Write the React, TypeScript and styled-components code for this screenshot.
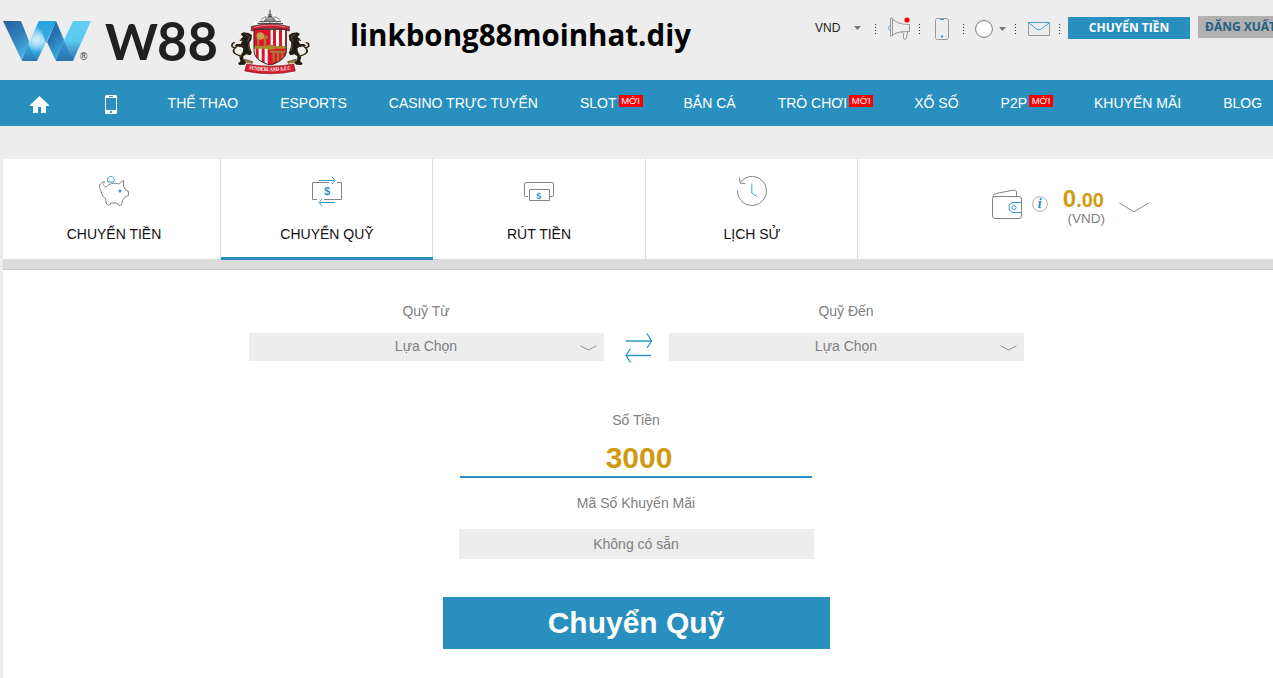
import React from "react";
import styled, { createGlobalStyle } from "styled-components";

const BLUE = "#298fbe";
const GREY = "#ededed";
const GOLD = "#d09a12";

const GlobalStyle = createGlobalStyle`
  * { box-sizing: border-box; }
  body {
    margin: 0;
    background: ${GREY};
    font-family: "Liberation Sans", Arial, sans-serif;
    font-size: 14px;
    overflow: hidden;
  }
  svg { display: block; flex: none; }
`;

const Page = styled.div`
  width: 1273px;
  height: 678px;
  overflow: hidden;
  display: flex;
  flex-direction: column;
`;

const Header = styled.header`
  display: flex;
  align-items: flex-start;
  height: 80px;
  flex: none;
  overflow: hidden;
`;

const Brand = styled.div`
  width: 350px;
  flex: none;
`;

const SiteTitle = styled.div`
  width: 465px;
  flex: none;
  padding-top: 13px;
  line-height: 44px;
`;

const Tools = styled.div`
  display: flex;
  align-items: center;
  width: 253px;
  height: 56px;
  flex: none;
  font-size: 12px;
  color: #222;
`;

const HeaderButton = styled.button<{ $muted?: boolean }>`
  flex: none;
  width: ${(p) => (p.$muted ? 90 : 122)}px;
  height: 22px;
  margin: ${(p) => (p.$muted ? "16px 0 0" : "17px 8px 0 0")};
  padding: 0 0 0 ${(p) => (p.$muted ? 7 : 0)}px;
  border: 0;
  background: ${(p) => (p.$muted ? "#b1b1b1" : BLUE)};
  color: ${(p) => (p.$muted ? "#235f80" : "#fff")};
  font: 700 12px/22px "Open Sans", "Noto Sans", sans-serif;
  text-align: ${(p) => (p.$muted ? "left" : "center")};
  white-space: nowrap;
`;

const Nav = styled.nav`
  display: flex;
  align-items: center;
  height: 46px;
  flex: none;
  padding-left: 30px;
  background: ${BLUE};
  color: #fff;
`;

const NavIcon = styled.a<{ $w: number; $gap: number }>`
  width: ${(p) => p.$w}px;
  margin-right: ${(p) => p.$gap}px;
  padding-top: 2px;
  flex: none;
`;

const NavItem = styled.a`
  display: flex;
  flex: none;
  margin-right: 42px;
  line-height: 46px;
  white-space: nowrap;
`;

const NewBadge = styled.span`
  width: 24px;
  height: 12px;
  margin: 15px -1px 0 2px;
  background: #f00;
  font: 400 9.5px/12px "Liberation Sans", Arial, sans-serif;
  text-align: center;
`;

const Panel = styled.main`
  flex: 1;
  margin: 33px 0 0 3px;
  background: #fff;
`;

const TabRow = styled.div`
  display: flex;
  height: 100px;
`;

const Tab = styled.div<{ $w: number; $active?: boolean; $inset?: number }>`
  display: flex;
  flex-direction: column;
  align-items: center;
  flex: none;
  width: ${(p) => p.$w}px;
  height: ${(p) => (p.$active ? 101 : 100)}px;
  padding-top: 16px;
  padding-left: ${(p) => p.$inset ?? 0}px;
  border-right: 1px solid #dcdcdc;
  border-bottom: ${(p) => (p.$active ? `3px solid ${BLUE}` : "0")};
  ${(p) => p.$active && "z-index: 1; border-right-width: 0; box-shadow: inset -1px 0 #dcdcdc;"}
  color: #111;
`;

const TabLabel = styled.span`
  margin-top: 19px;
  line-height: 16px;
`;

const Balance = styled.div`
  display: flex;
  align-items: flex-start;
  padding: 29px 0 0 133px;
`;

const Amount = styled.div`
  width: 42px;
  margin: -1px 15px 0 14px;
  text-align: right;
  color: ${GOLD};
  font-weight: 700;
  font-size: 20px;
  line-height: 24px;
  white-space: nowrap;
`;

const BigDigit = styled.span`
  font-size: 24px;
`;

const Currency = styled.div`
  margin: -1px -1px 0 0;
  color: #808080;
  font-weight: 400;
  font-size: 13.5px;
  line-height: 16px;
`;

const Divider = styled.div`
  height: 11px;
  background: #dcdcdc;
  border-bottom: 1px solid #c8c8c8;
`;

const Form = styled.form`
  display: flex;
  flex-direction: column;
  align-items: center;
  width: 775px;
  margin-left: 246px;
  padding-top: 33px;
  color: #808080;
`;

const FundRow = styled.div`
  display: flex;
  align-items: flex-end;
  width: 100%;
  margin-bottom: 51px;
`;

const Field = styled.div`
  width: 355px;
`;

const Label = styled.div`
  height: 16px;
  padding-right: 1px;
  line-height: 16px;
  text-align: center;
`;

const Select = styled.div`
  display: grid;
  grid-template-columns: 31px 1fr 32px;
  align-items: center;
  height: 28px;
  margin-top: 14px;
  background: ${GREY};
  line-height: 26px;
  text-align: center;
`;

const SelectText = styled.span`
  grid-column: 2;
  height: 28px;
`;

const SwapSlot = styled.div`
  width: 65px;
  height: 29px;
  padding-left: 21px;
`;

const AmountInput = styled.div`
  width: 352px;
  height: 50px;
  margin: 0 1px 17px 0;
  padding: 13px 0 0 6px;
  border-bottom: 2px solid ${BLUE};
  color: ${GOLD};
  font-weight: 700;
  font-size: 30px;
  line-height: 34px;
  text-align: center;
`;

const PromoBox = styled.div`
  width: 355px;
  height: 30px;
  margin: 18px 0 38px;
  padding-right: 1px;
  background: ${GREY};
  line-height: 30px;
  text-align: center;
`;

const Submit = styled.button`
  width: 387px;
  height: 52px;
  border: 0;
  padding: 0 1px 0 0;
  background: ${BLUE};
  color: #fff;
  font: 700 30px/52px "Liberation Sans", Arial, sans-serif;
`;

const Logo = () => (
  <svg width="350" height="80" viewBox="0 0 350 80">
    <defs>
      <linearGradient id="l1" x1="0" y1="0" x2=".7" y2="1">
        <stop offset="0" stopColor="#2b5f9e" />
        <stop offset=".45" stopColor="#2f7dbb" />
        <stop offset="1" stopColor="#55c3ee" />
      </linearGradient>
      <linearGradient id="l2" x1="0" y1="0" x2="0" y2="1">
        <stop offset="0" stopColor="#1f9cdb" />
        <stop offset=".5" stopColor="#8dd2f2" />
        <stop offset=".75" stopColor="#35aee3" />
        <stop offset="1" stopColor="#2d78b2" />
      </linearGradient>
      <linearGradient id="l3" x1="0" y1="0" x2=".7" y2="1">
        <stop offset="0" stopColor="#2b68a8" />
        <stop offset=".35" stopColor="#2570b0" />
        <stop offset="1" stopColor="#43c1ee" />
      </linearGradient>
      <linearGradient id="l4" x1="0" y1="0" x2="0" y2="1">
        <stop offset="0" stopColor="#62cdf5" />
        <stop offset=".5" stopColor="#5acaf3" />
        <stop offset="1" stopColor="#2b6dab" />
      </linearGradient>
      <radialGradient id="l5">
        <stop offset="0" stopColor="#d3eefb" />
        <stop offset="1" stopColor="#d3eefb" stopOpacity="0" />
      </radialGradient>
      <clipPath id="mark"><path d="M28 43L39 21L46 43L37 61Z" /></clipPath>
    </defs>
    <path d="M3 21H21L37 61H22Z" fill="url(#l1)" />
    <path d="M39 21H56L37 61H22L28 45Z" fill="url(#l2)" />
    <path d="M56 21L73 61H56L47 42Z" fill="url(#l3)" />
    <path d="M39 21H56L46 43L37 25Z" fill="#29a5df" opacity=".85" />
    <path d="M73 21H91L73 61H56L64 40Z" fill="url(#l4)" />
    <path d="M64 41L73 61H56Z" fill="#2878b7" opacity=".65" />
    <path d="M28 45L37 61H22Z" fill="#287ab8" opacity=".45" />
    <circle cx="37" cy="40" r="12" fill="url(#l5)" clipPath="url(#mark)" />
    <text x="80" y="60" fontSize="10" fontFamily="Liberation Sans, sans-serif" fill="#333">®</text>
    <g fontWeight="700" fontFamily="Lato, sans-serif" fill="#202020">
      <text x="105" y="60" fontSize="50" textLength="53" lengthAdjust="spacingAndGlyphs">W</text>
      <text x="157" y="61" fontSize="54" textLength="61" lengthAdjust="spacingAndGlyphs">88</text>
    </g>
    <Crest />
  </svg>
);

const Lion = () => (
  <g transform="translate(0 5) scale(1.3 1)">
    <path d="M36 82L43 77L54 79L62 85L61 99L56 108L58 124L62 139L58 146L49 143L42 149L43 160L49 168L45 174L33 175L30 170L36 164L33 151L41 136L42 124L33 119L26 121L22 117L27 112L36 112L40 103L36 96L42 91Z" fill="#201b17" stroke="#f5f2e4" strokeWidth="5" paintOrder="stroke" strokeLinejoin="round" />
    <path d="M37 148C18 142 16 132 24 123C13 124 14 109 23 108M44 115L33 120M43 99L34 101" fill="none" stroke="#332817" strokeWidth="4" />
    <path d="M47 83L57 91L52 105M40 136L35 151M54 113L57 133" fill="none" stroke="#9b7d35" strokeWidth="1.5" />
  </g>
);

const Crest = () => (
  <g transform="translate(225 5) scale(.33333)">
    <defs>
      <clipPath id="shield"><path d="M87 73H184V137C184 164 153 174 136 181C117 174 87 164 87 137Z" /></clipPath>
      <path id="motto" d="M72 193Q136 204 201 193" />
    </defs>
    <Lion />
    <g transform="translate(272 0) scale(-1 1)"><Lion /></g>
    <path d="M81 65L94 48L110 42L124 26H146L159 42L177 48L190 65L187 84H84Z" fill="#fff" />
    <path d="M135 14V35M128 30H142M128 35H142M121 39H149M119 45H151M103 49H168M97 55H174" stroke="#383838" strokeWidth="3" />
    <path d="M109 43L123 34M148 34L164 43M113 53L123 42L134 53L145 42L157 53" stroke="#777" strokeWidth="3" fill="none" />
    <path d="M79 65Q136 47 193 65V78Q136 62 79 78Z" fill="#c71e31" stroke="#292222" strokeWidth="2" />
    <path d="M88 67Q136 54 184 67" fill="none" stroke="#f4bbc0" strokeWidth="3" strokeDasharray="4 2" />
    <g clipPath="url(#shield)">
      <path d="M84 69H188V184H84Z" fill="#fff" />
      <path d="M87 73H137V128H87ZM144 73H153V125H144ZM162 73H171V125H162ZM180 73H186V125H180ZM92 128H101V182H92ZM110 128H119V182H110ZM128 128H187V183H128Z" fill="#e01428" />
      <path d="M94 91L107 84L129 94V101H123V124H116V101H103V124H97V101ZM135 137H181V143H175V170H169V144H162V170H156V144H149V170H143V144H136Z" fill="#aa7835" />
      <circle cx="106" cy="93" r="11" fill="#c6a14b" />
      <path d="M87 123H123Q136 116 149 123H184V131H149Q136 138 123 131H87Z" fill="#a48a2d" />
    </g>
    <path d="M87 73H184V137C184 164 153 174 136 181C117 174 87 164 87 137Z" fill="none" stroke="#28221f" strokeWidth="3" />
    <path d="M57 163L83 170L77 183L65 181ZM214 163L188 170L194 183L206 181Z" fill="#a78524" stroke="#2b201b" strokeWidth="2" />
    <path d="M65 177Q136 190 206 177L211 198Q136 215 59 198Z" fill="#d51b2d" stroke="#fff" strokeWidth="6" paintOrder="stroke" />
    <path d="M65 177Q136 190 206 177L211 198Q136 215 59 198Z" fill="none" stroke="#7c1720" strokeWidth="2" />
    <text fontFamily="Liberation Serif, serif" fontWeight="700" fontSize="17" fill="#fff" textLength="126" lengthAdjust="spacingAndGlyphs"><textPath href="#motto">SUNDERLAND A.F.C</textPath></text>
  </g>
);

const Title = () => (
  <svg width="350" height="44" viewBox="0 0 350 44">
    <text x="0" y="33" textLength="341" lengthAdjust="spacingAndGlyphs" fontFamily="Open Sans, Noto Sans, sans-serif" fontWeight="700" fontSize="30" fill="#000">linkbong88moinhat.diy</text>
  </svg>
);

const CurrencyPick = styled.span`
  width: 39px;
`;

const Dots = styled.span<{ $ml: number; $mr: number }>`
  flex: none;
  width: 1px;
  height: 11px;
  margin: 2px ${(p) => p.$mr}px 0 ${(p) => p.$ml}px;
  background: repeating-linear-gradient(#333 0 1px, transparent 1px 3px);
`;

const Caret = () => (
  <svg width="7" height="4" viewBox="0 0 7 4"><path d="M0 0H7L3.5 4Z" fill="#777" /></svg>
);

const Megaphone = () => (
  <svg width="24" height="24" viewBox="0 0 24 24" fill="none" stroke="#999">
    <path d="M2.5 1V19H4.5V1ZM4.5 2C9 6 14 7.5 21.5 7.5V14.5C14 14.5 9 15 4.5 18M13.5 15L15.5 16.5V21.5Q17 23 18.5 21.5L19.5 15" />
    <path d="M2 9C-.2 9 -.2 13 2 13" stroke="#47a4cb" />
    <circle cx="19" cy="3" r="2.6" fill="#f00" stroke="none" />
  </svg>
);

const PhoneOutline = () => (
  <svg width="14" height="22" viewBox="0 0 14 22" fill="none" stroke="#999">
    <rect x=".5" y=".5" width="13" height="21" rx="2" />
    <path d="M5 1.5H9" stroke="#3ba0cc" /><circle cx="7" cy="18.5" r="1.2" fill="#3ba0cc" stroke="none" />
  </svg>
);

const Circle = () => (
  <svg width="18" height="18" viewBox="0 0 18 18"><circle cx="9" cy="9" r="8.4" fill="#fff" stroke="#777" /></svg>
);

const Envelope = () => (
  <svg width="22" height="14" viewBox="0 0 22 14" fill="none">
    <path d="M.5 .5V13.5H21.5V.5" stroke="#999" /><path d="M0 .5H22M1 1L9 7.2Q11 8.7 13 7.2L21 1" stroke="#45a3ce" />
  </svg>
);

const Slot = styled.span<{ $ml?: number; $top?: number }>`
  margin-left: ${(p) => p.$ml ?? 0}px;
  padding-top: ${(p) => p.$top ?? 0}px;
`;

const HomeIcon = () => (
  <svg width="19" height="19" viewBox="0 0 19 19"><path d="M9.5 1L19 10V11H16V18H11V12H8V18H3V11H0V10Z" fill="#fff" /></svg>
);

const MobileIcon = () => (
  <svg width="12" height="19" viewBox="0 0 12 19">
    <path fillRule="evenodd" fill="#fff" d="M1 0H11L12 1V18L11 19H1L0 18V1ZM1 3V15H11V3ZM4 1V2H8V1ZM5 16V18H7V16Z" />
  </svg>
);

const PiggyIcon = () => (
  <svg width="32" height="32" viewBox="0 0 32 32" fill="none" stroke="#858585">
    <path d="M6.5 6.5C1.5 7.5 .2 12 2.5 14.5C3.5 18 4 21 7.5 24L8.5 29Q10.5 31.5 12.5 29.5V28H19L20 30Q22 31.5 23.5 29.5L24.5 25.5L27.5 21.5L30.5 20.5V16.5L28 15.5L25.5 11.5V5.5L21 9C16 7.5 11 8.5 8 12C5.5 11.5 5 9.5 6.5 6.5Z" />
    <path d="M10 7C8.5 4 10.5 1.5 13 1.5C15.5 1.5 17.5 4 15.5 7Z" stroke="#2e98c9" />
    <circle cx="22" cy="16" r="1.5" fill="#2e98c9" stroke="none" />
  </svg>
);

const TransferIcon = () => (
  <svg width="32" height="32" viewBox="0 0 32 32" fill="none" stroke="#858585">
    <path d="M18 7.5H1.5V24.5H6M13 24.5H30.5V7.5H26" />
    <path d="M8 5.5H23M21 2L24 5.5L21 9M24 27.5H9M11 24L8 27.5L11 31" stroke="#2e98c9" />
    <text x="13" y="20" fontFamily="Liberation Sans, sans-serif" fontWeight="700" fontSize="11" fill="#2e98c9" stroke="none">$</text>
  </svg>
);

const WithdrawIcon = () => (
  <svg width="32" height="32" viewBox="0 0 32 32" fill="none" stroke="#858585">
    <path d="M5 21.5H2.5Q1.5 21.5 1.5 20.5V9Q1.5 7.5 3 7.5H29Q30.5 7.5 30.5 9V20.5Q30.5 21.5 29.5 21.5H27" />
    <path d="M6.5 14.5H26.5V25.5H6.5Z" />
    <text x="13.3" y="23.5" fontFamily="Liberation Sans, sans-serif" fontWeight="700" fontSize="9" fill="#2e98c9" stroke="none">$</text>
  </svg>
);

const HistoryIcon = () => (
  <svg width="32" height="32" viewBox="0 0 32 32" fill="none" stroke="#858585">
    <path d="M1.5 15.5A14.5 14.5 0 1 0 4.6 7M3.5 2.5L4.2 8L9.5 8.8" />
    <path d="M15.8 8.5V18L21.5 21.8" stroke="#4aabd3" />
  </svg>
);

const WalletIcon = () => (
  <svg width="32" height="32" viewBox="0 0 32 32" fill="none" stroke="#858585">
    <rect x="1.5" y="8.5" width="29" height="22" rx="2.5" />
    <path d="M2 9Q2 6 5 5.5L23 2Q25 1.5 25.5 4V8" />
    <path d="M30 14.5H23Q18 14.5 18 19.5Q18 24.5 23 24.5H30" stroke="#2e98c9" />
    <circle cx="23" cy="19.5" r="2" stroke="#2e98c9" />
  </svg>
);

const InfoIcon = () => (
  <svg width="16" height="16" viewBox="0 0 16 16"><circle cx="8" cy="8" r="7.4" fill="none" stroke="#999" strokeWidth=".8" /><text x="5.8" y="12.4" fill="#258bbc" fontFamily="Liberation Serif, serif" fontStyle="italic" fontWeight="700" fontSize="14">i</text></svg>
);

const Chevron = ({ small = false }: { small?: boolean }) => (
  <svg width={small ? 17 : 30} height={small ? 6 : 11} viewBox={small ? "0 0 17 6" : "0 0 30 11"} fill="none" stroke="#888">
    <path d={small ? "M.5 .8L8.5 5L16.5 .8" : "M.5 1L15 9.8L29.5 1"} strokeWidth={small ? 0.9 : 1} />
  </svg>
);

const SwapIcon = () => (
  <svg width="28" height="32" viewBox="0 0 28 32" fill="none" stroke="#2e98c9" strokeWidth="1.3">
    <path d="M1 9H26.5M22 1.5L26.5 9L22 16M26 23.5H1M5.5 16.5L1 23.5L5.5 30.5" />
  </svg>
);

const navItems = [
  { label: "THỂ THAO" },
  { label: "ESPORTS" },
  { label: "CASINO TRỰC TUYẾN" },
  { label: "SLOT", fresh: true },
  { label: "BẮN CÁ" },
  { label: "TRÒ CHƠI", fresh: true },
  { label: "XỔ SỐ" },
  { label: "P2P", fresh: true },
  { label: "KHUYẾN MÃI" },
  { label: "BLOG" },
];

const tabs = [
  { label: "CHUYỂN TIỀN", width: 218, inset: 5, icon: <PiggyIcon /> },
  { label: "CHUYỂN QUỸ", width: 212, icon: <TransferIcon />, active: true },
  { label: "RÚT TIỀN", width: 213, icon: <WithdrawIcon /> },
  { label: "LỊCH SỬ", width: 212, inset: 1, icon: <HistoryIcon /> },
];

const FundSelect = ({ label }: { label: string }) => (
  <Field>
    <Label>{label}</Label>
    <Select>
      <SelectText>Lựa Chọn</SelectText>
      <Slot $ml={8} $top={1}><Chevron small /></Slot>
    </Select>
  </Field>
);

export default function App() {
  return (
    <Page>
      <GlobalStyle />
      <Header>
        <Brand><Logo /></Brand>
        <SiteTitle><Title /></SiteTitle>
        <Tools>
          <CurrencyPick>VND</CurrencyPick>
          <Caret />
          <Dots $ml={14} $mr={12} />
          <Slot $top={2}><Megaphone /></Slot>
          <Dots $ml={7} $mr={15} />
          <Slot $top={2}><PhoneOutline /></Slot>
          <Dots $ml={14} $mr={11} />
          <Slot $top={2}><Circle /></Slot>
          <Slot $ml={6} $top={2}><Caret /></Slot>
          <Dots $ml={9} $mr={12} />
          <Slot $top={2}><Envelope /></Slot>
          <Dots $ml={9} $mr={0} />
        </Tools>
        <HeaderButton>CHUYỂN TIỀN</HeaderButton>
        <HeaderButton $muted>ĐĂNG XUẤT</HeaderButton>
      </Header>
      <Nav>
        <NavIcon $w={19} $gap={56}><HomeIcon /></NavIcon>
        <NavIcon $w={12} $gap={50.6}><MobileIcon /></NavIcon>
        {navItems.map((n) => (
          <NavItem key={n.label}>{n.label}{n.fresh && <NewBadge>MỚI</NewBadge>}</NavItem>
        ))}
      </Nav>
      <Panel>
        <TabRow>
          {tabs.map((t) => (
            <Tab key={t.label} $w={t.width} $active={t.active} $inset={t.inset}>{t.icon}<TabLabel>{t.label}</TabLabel></Tab>
          ))}
          <Balance>
            <WalletIcon />
            <Slot $ml={9} $top={8}><InfoIcon /></Slot>
            <Amount><BigDigit>0</BigDigit>.00<Currency>(VND)</Currency></Amount>
            <Slot $top={14}><Chevron /></Slot>
          </Balance>
        </TabRow>
        <Divider />
        <Form>
          <FundRow>
            <FundSelect label="Quỹ Từ" />
            <SwapSlot><SwapIcon /></SwapSlot>
            <FundSelect label="Quỹ Đến" />
          </FundRow>
          <Label>Số Tiền</Label>
          <AmountInput>3000</AmountInput>
          <Label>Mã Số Khuyến Mãi</Label>
          <PromoBox>Không có sẵn</PromoBox>
          <Submit type="button">Chuyển Quỹ</Submit>
        </Form>
      </Panel>
    </Page>
  );
}
